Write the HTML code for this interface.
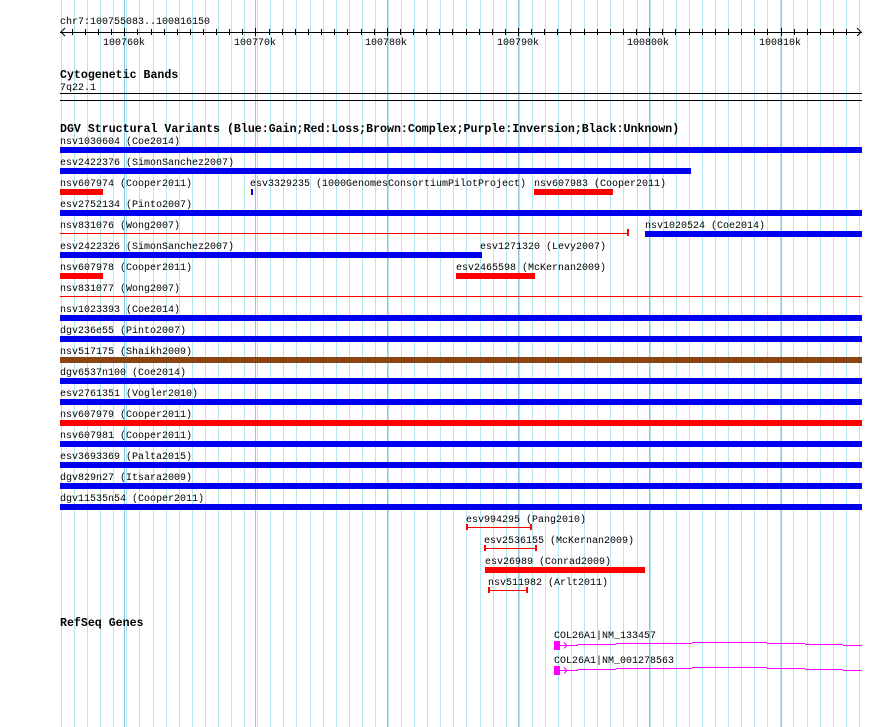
<!DOCTYPE html>
<html><head><meta charset="utf-8"><style>
html,body{margin:0;padding:0;background:#fff;width:890px;height:727px;overflow:hidden}
svg{display:block}
text{font-family:"Liberation Mono","DejaVu Sans Mono",monospace;font-size:10px;fill:#000}
.h{font-weight:bold;font-size:11.6px}
</style></head><body>
<svg width="890" height="727" viewBox="0 0 890 727" xmlns="http://www.w3.org/2000/svg" shape-rendering="crispEdges">
<path stroke="#b4e6ee" stroke-width="1" fill="none" d="M61.5 0V727M74.5 0V727M87.5 0V727M100.5 0V727M113.5 0V727M126.5 0V727M139.5 0V727M153.5 0V727M166.5 0V727M179.5 0V727M192.5 0V727M205.5 0V727M218.5 0V727M231.5 0V727M244.5 0V727M257.5 0V727M270.5 0V727M283.5 0V727M296.5 0V727M310.5 0V727M323.5 0V727M336.5 0V727M349.5 0V727M362.5 0V727M375.5 0V727M388.5 0V727M401.5 0V727M414.5 0V727M427.5 0V727M440.5 0V727M453.5 0V727M466.5 0V727M480.5 0V727M493.5 0V727M506.5 0V727M519.5 0V727M532.5 0V727M545.5 0V727M558.5 0V727M571.5 0V727M584.5 0V727M597.5 0V727M610.5 0V727M623.5 0V727M637.5 0V727M650.5 0V727M663.5 0V727M676.5 0V727M689.5 0V727M702.5 0V727M715.5 0V727M728.5 0V727M741.5 0V727M754.5 0V727M767.5 0V727M780.5 0V727M793.5 0V727M807.5 0V727M820.5 0V727M833.5 0V727M846.5 0V727M859.5 0V727"/>
<path stroke="#8ec6e6" stroke-width="1" fill="none" d="M124.5 0V727M255.5 0V727M387.5 0V727M518.5 0V727M649.5 0V727M781.5 0V727"/>
<!-- ruler -->
<path stroke="#000" stroke-width="1" fill="none" d="M72.5 29v6M85.5 29v6M98.5 29v6M111.5 29v6M137.5 29v6M151.5 29v6M164.5 29v6M177.5 29v6M190.5 29v6M203.5 29v6M216.5 29v6M229.5 29v6M242.5 29v6M269.5 29v6M282.5 29v6M295.5 29v6M308.5 29v6M321.5 29v6M334.5 29v6M347.5 29v6M361.5 29v6M374.5 29v6M400.5 29v6M413.5 29v6M426.5 29v6M439.5 29v6M452.5 29v6M466.5 29v6M479.5 29v6M492.5 29v6M505.5 29v6M531.5 29v6M544.5 29v6M557.5 29v6M570.5 29v6M584.5 29v6M597.5 29v6M610.5 29v6M623.5 29v6M636.5 29v6M662.5 29v6M675.5 29v6M689.5 29v6M702.5 29v6M715.5 29v6M728.5 29v6M741.5 29v6M754.5 29v6M767.5 29v6M794.5 29v6M807.5 29v6M820.5 29v6M833.5 29v6M846.5 29v6M124.5 28v8M255.5 28v8M387.5 28v8M518.5 28v8M649.5 28v8M781.5 28v8"/>
<text x="60" y="24">chr7:100755083..100816150</text>
<rect x="60" y="32" width="802" height="1" fill="#000"/>
<path d="M65 28 L61 32 L65 36 M857 28 L861 32 L857 36" stroke="#000" fill="none" shape-rendering="auto"/>
<text x="103" y="45">100760k</text>
<text x="234" y="45">100770k</text>
<text x="365" y="45">100780k</text>
<text x="497" y="45">100790k</text>
<text x="627" y="45">100800k</text>
<text x="759" y="45">100810k</text>

<text class="h" x="60" y="78">Cytogenetic Bands</text>
<text x="60" y="90">7q22.1</text>
<rect x="60" y="93" width="802" height="1" fill="#000"/>
<rect x="60" y="100" width="802" height="1" fill="#000"/>

<text class="h" x="60" y="132">DGV Structural Variants (Blue:Gain;Red:Loss;Brown:Complex;Purple:Inversion;Black:Unknown)</text>

<text x="60" y="144">nsv1030604 (Coe2014)</text>
<rect x="60" y="147" width="802" height="6" fill="#0000ee"/>
<text x="60" y="165">esv2422376 (SimonSanchez2007)</text>
<rect x="60" y="168" width="631" height="6" fill="#0000ee"/>
<text x="60" y="186">nsv607974 (Cooper2011)</text>
<rect x="60" y="189" width="43" height="6" fill="#ff0000"/>
<text x="250" y="186">esv3329235 (1000GenomesConsortiumPilotProject)</text>
<rect x="251" y="189" width="2" height="6" fill="#0000ee"/>
<text x="534" y="186">nsv607983 (Cooper2011)</text>
<rect x="534" y="189" width="79" height="6" fill="#ff0000"/>
<text x="60" y="207">esv2752134 (Pinto2007)</text>
<rect x="60" y="210" width="802" height="6" fill="#0000ee"/>
<text x="60" y="228">nsv831076 (Wong2007)</text>
<rect x="60" y="233" width="568" height="1" fill="#ff0000"/>
<rect x="627" y="229" width="2" height="7" fill="#ff0000"/>
<text x="645" y="228">nsv1020524 (Coe2014)</text>
<rect x="645" y="231" width="217" height="6" fill="#0000ee"/>
<text x="60" y="249">esv2422326 (SimonSanchez2007)</text>
<rect x="60" y="252" width="420" height="6" fill="#0000ee"/>
<text x="480" y="249">esv1271320 (Levy2007)</text>
<rect x="480" y="252" width="2" height="6" fill="#0000ee"/>
<text x="60" y="270">nsv607978 (Cooper2011)</text>
<rect x="60" y="273" width="43" height="6" fill="#ff0000"/>
<text x="456" y="270">esv2465598 (McKernan2009)</text>
<rect x="456" y="273" width="79" height="6" fill="#ff0000"/>
<text x="60" y="291">nsv831077 (Wong2007)</text>
<rect x="60" y="296" width="802" height="1" fill="#ff0000"/>
<text x="60" y="312">nsv1023393 (Coe2014)</text>
<rect x="60" y="315" width="802" height="6" fill="#0000ee"/>
<text x="60" y="333">dgv236e55 (Pinto2007)</text>
<rect x="60" y="336" width="802" height="6" fill="#0000ee"/>
<text x="60" y="354">nsv517175 (Shaikh2009)</text>
<rect x="60" y="357" width="802" height="6" fill="#8b4513"/>
<text x="60" y="375">dgv6537n100 (Coe2014)</text>
<rect x="60" y="378" width="802" height="6" fill="#0000ee"/>
<text x="60" y="396">esv2761351 (Vogler2010)</text>
<rect x="60" y="399" width="802" height="6" fill="#0000ee"/>
<text x="60" y="417">nsv607979 (Cooper2011)</text>
<rect x="60" y="420" width="802" height="6" fill="#ff0000"/>
<text x="60" y="438">nsv607981 (Cooper2011)</text>
<rect x="60" y="441" width="802" height="6" fill="#0000ee"/>
<text x="60" y="459">esv3693369 (Palta2015)</text>
<rect x="60" y="462" width="802" height="6" fill="#0000ee"/>
<text x="60" y="480">dgv829n27 (Itsara2009)</text>
<rect x="60" y="483" width="802" height="6" fill="#0000ee"/>
<text x="60" y="501">dgv11535n54 (Cooper2011)</text>
<rect x="60" y="504" width="802" height="6" fill="#0000ee"/>

<text x="466" y="522">esv994295 (Pang2010)</text>
<rect x="467" y="527" width="64" height="1" fill="#ff0000"/>
<rect x="466" y="524" width="2" height="6" fill="#ff0000"/>
<rect x="530" y="524" width="2" height="6" fill="#ff0000"/>
<text x="484" y="543">esv2536155 (McKernan2009)</text>
<rect x="485" y="548" width="51" height="1" fill="#ff0000"/>
<rect x="484" y="545" width="2" height="6" fill="#ff0000"/>
<rect x="535" y="545" width="2" height="6" fill="#ff0000"/>
<text x="485" y="564">esv26989 (Conrad2009)</text>
<rect x="485" y="567" width="160" height="6" fill="#ff0000"/>
<text x="488" y="585">nsv511982 (Arlt2011)</text>
<rect x="489" y="590" width="38" height="1" fill="#ff0000"/>
<rect x="488" y="587" width="2" height="6" fill="#ff0000"/>
<rect x="526" y="587" width="2" height="6" fill="#ff0000"/>

<text class="h" x="60" y="626">RefSeq Genes</text>
<text x="554" y="638">COL26A1|NM_133457</text>
<rect x="554" y="641" width="6" height="9" fill="#ff00ff"/>
<path d="M560 645.5 H578 M564 642.5 L567 645.5 L564 648.5 M578 644.5 H616 M616 643.5 H692 M692 642.5 H767 M767 643.5 H805 M805 644.5 H843 M843 645.5 H862" stroke="#ff00ff" fill="none"/>
<text x="554" y="663">COL26A1|NM_001278563</text>
<rect x="554" y="666" width="6" height="9" fill="#ff00ff"/>
<path d="M560 670.5 H578 M564 667.5 L567 670.5 L564 673.5 M578 669.5 H616 M616 668.5 H692 M692 667.5 H767 M767 668.5 H805 M805 669.5 H843 M843 670.5 H862" stroke="#ff00ff" fill="none"/>
</svg>
</body></html>
